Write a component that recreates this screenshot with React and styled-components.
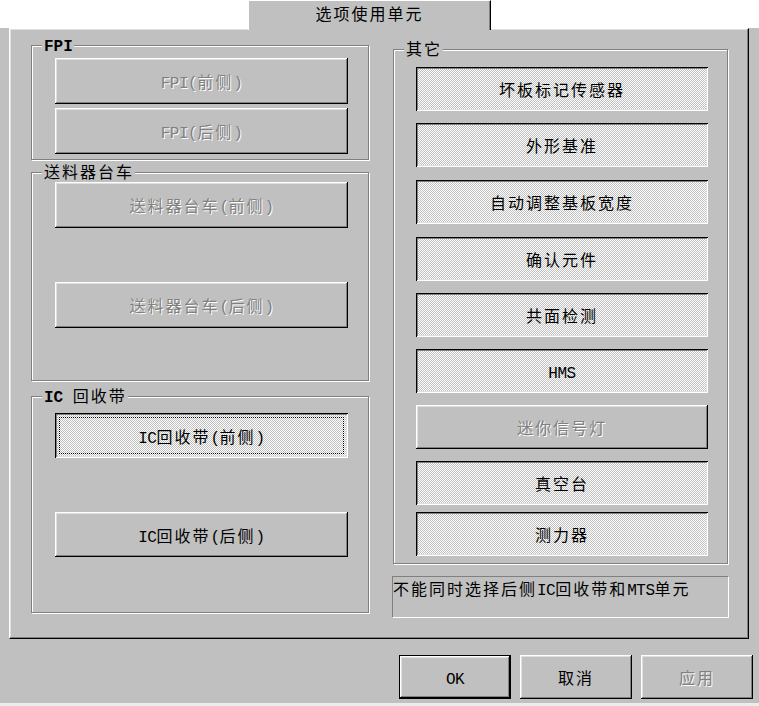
import React from 'react';
import styled, { createGlobalStyle, css } from 'styled-components';

const GlobalStyle = createGlobalStyle`
  html, body {
    margin: 0;
    padding: 0;
    background: #c0c0c0;
  }
`;

const Window = styled.div`
  width: 759px;
  height: 706px;
  box-sizing: border-box;
  background: #c0c0c0;
  border-bottom: 3px solid #ececec;
  display: flex;
  flex-direction: column;
  font-family: "Noto Sans CJK SC", "Noto Sans", sans-serif;
  font-size: 16px;
  letter-spacing: 2px;
  color: #000;
`;

const TabStrip = styled.div`
  flex-shrink: 0;
  height: 28px;
  background: #fff;
  display: flex;
  padding-left: 248px;
`;

const Tab = styled.div`
  position: relative;
  z-index: 1;
  width: 243px;
  height: 30px;
  box-sizing: border-box;
  background: #c0c0c0;
  border-top: 1px solid #fff;
  border-left: 1px solid #fff;
  border-right: 1px solid #000;
  box-shadow: inset -1px 0 #808080;
  display: flex;
  align-items: center;
  justify-content: center;
  padding-bottom: 6px;
  white-space: nowrap;
`;

const Panel = styled.div`
  flex-shrink: 0;
  margin-left: 9px;
  width: 740px;
  height: 611px;
  box-sizing: border-box;
  border-top: 1px solid #fff;
  border-left: 1px solid #fff;
  border-right: 1px solid #000;
  border-bottom: 1px solid #000;
  box-shadow: inset -1px -1px #808080, inset 1px 1px #dfdfdf;
  padding-left: 21px;
  display: grid;
  grid-template-columns: 338px 335px;
  column-gap: 24px;
  align-items: start;
`;

const Column = styled.div`
  display: flex;
  flex-direction: column;
`;

const Latin = styled.span`
  font-family: "Liberation Mono", "DejaVu Sans Mono", monospace;
  font-size: 16px;
  letter-spacing: -0.5px;
`;

const GroupBox = styled.div`
  margin-top: ${(p) => p.$top}px;
  height: ${(p) => p.$h}px;
  box-sizing: border-box;
  border: 1px solid #808080;
  box-shadow: 1px 1px 0 #fff, inset 1px 1px 0 #fff;
  padding-left: ${(p) => p.$pl}px;
  display: flex;
  flex-direction: column;
  align-items: flex-start;
`;

const GroupLabel = styled.div`
  margin: -11px 0 0 ${(p) => 10 - p.$pl}px;
  padding: 0 1px 0 2px;
  height: 18px;
  line-height: 18px;
  background: #c0c0c0;
  white-space: nowrap;

  ${Latin} {
    font-weight: bold;
    letter-spacing: 0;
  }
`;

const raised = css`
  box-shadow: inset -1px -1px #000, inset 1px 1px #fff, inset -2px -2px #808080,
    inset 2px 2px #dfdfdf;
`;

const checked = css`
  box-shadow: inset 1px 1px #000, inset -1px -1px #fff, inset 2px 2px #808080,
    inset -2px -2px #dfdfdf;
  background-color: #c0c0c0;
  background-image: conic-gradient(#fff 0 25%, #c0c0c0 0 50%, #fff 0 75%, #c0c0c0 0);
  background-size: 2px 2px;
`;

const Btn = styled.button`
  flex-shrink: 0;
  margin: ${(p) => p.$gap || 0}px 0 0 0;
  width: ${(p) => p.$w}px;
  height: ${(p) => p.$h}px;
  box-sizing: border-box;
  padding: 0;
  border: none;
  background: #c0c0c0;
  font: inherit;
  letter-spacing: inherit;
  color: #000;
  display: flex;
  align-items: center;
  justify-content: center;
  white-space: nowrap;
  cursor: default;
  ${(p) => (p.$checked ? checked : raised)}

  &:disabled {
    color: #808080;
    text-shadow: 1px 1px 0 #fff;
  }

  ${(p) =>
    p.$focus &&
    css`
      outline: 1px dotted #000;
      outline-offset: -5px;
    `}

  ${(p) =>
    p.$default &&
    css`
      border: 1px solid #000;
    `}
`;

const Note = styled.div`
  margin-top: 12px;
  height: 42px;
  box-sizing: border-box;
  border-top: 1px solid #808080;
  border-left: 1px solid #808080;
  border-right: 1px solid #fff;
  border-bottom: 1px solid #fff;
  margin-left: -1px;
  width: 337px;
  padding-top: 2px;
  line-height: 18px;
  white-space: nowrap;
`;

const Footer = styled.div`
  display: flex;
  justify-content: flex-end;
  gap: 9px;
  padding: 16px 6px 0 0;
`;

const Txt = ({ children }) => (
  <span>
    {children
      .split(/([\x20-\x7e]+)/)
      .filter(Boolean)
      .map((s, i) => (/^[\x20-\x7e]+$/.test(s) ? <Latin key={i}>{s}</Latin> : s))}
  </span>
);

const leftGroups = [
  {
    title: 'FPI',
    top: 16,
    h: 115,
    buttons: [
      { label: 'FPI(前侧)', disabled: true, gap: 5, h: 46 },
      { label: 'FPI(后侧)', disabled: true, gap: 4, h: 46 },
    ],
  },
  {
    title: '送料器台车',
    top: 12,
    h: 209,
    buttons: [
      { label: '送料器台车(前侧)', disabled: true, gap: 2, h: 46 },
      { label: '送料器台车(后侧)', disabled: true, gap: 54, h: 46 },
    ],
  },
  {
    title: 'IC 回收带',
    top: 15,
    h: 217,
    buttons: [
      { label: 'IC回收带(前侧)', checked: true, focus: true, gap: 9, h: 45 },
      { label: 'IC回收带(后侧)', gap: 54, h: 45 },
    ],
  },
];

const otherButtons = [
  { label: '坏板标记传感器', checked: true, gap: 10 },
  { label: '外形基准', checked: true, gap: 12 },
  { label: '自动调整基板宽度', checked: true, gap: 13 },
  { label: '确认元件', checked: true, gap: 13 },
  { label: '共面检测', checked: true, gap: 12 },
  { label: 'HMS', checked: true, gap: 12 },
  { label: '迷你信号灯', disabled: true, gap: 12 },
  { label: '真空台', checked: true, gap: 12 },
  { label: '测力器', checked: true, gap: 7 },
];

export default function App() {
  return (
    <>
      <GlobalStyle />
      <Window>
        <TabStrip>
          <Tab>选项使用单元</Tab>
        </TabStrip>
        <Panel>
          <Column>
            {leftGroups.map((g) => (
              <GroupBox key={g.title} $top={g.top} $h={g.h} $pl={23}>
                <GroupLabel $pl={23}>
                  <Txt>{g.title}</Txt>
                </GroupLabel>
                {g.buttons.map((b) => (
                  <Btn
                    key={b.label}
                    $w={293}
                    $h={b.h}
                    $gap={b.gap}
                    $checked={b.checked}
                    $focus={b.focus}
                    disabled={b.disabled}
                  >
                    <Txt>{b.label}</Txt>
                  </Btn>
                ))}
              </GroupBox>
            ))}
          </Column>
          <Column>
            <GroupBox $top={20} $h={515} $pl={22}>
              <GroupLabel $pl={22}>其它</GroupLabel>
              {otherButtons.map((b) => (
                <Btn
                  key={b.label}
                  $w={292}
                  $h={44}
                  $gap={b.gap}
                  $checked={b.checked}
                  disabled={b.disabled}
                >
                  <Txt>{b.label}</Txt>
                </Btn>
              ))}
            </GroupBox>
            <Note>
              <Txt>不能同时选择后侧IC回收带和MTS单元</Txt>
            </Note>
          </Column>
        </Panel>
        <Footer>
          <Btn $w={112} $h={44} $default>
            <Txt>OK</Txt>
          </Btn>
          <Btn $w={112} $h={44}>取消</Btn>
          <Btn $w={112} $h={44} disabled>
            应用
          </Btn>
        </Footer>
      </Window>
    </>
  );
}
